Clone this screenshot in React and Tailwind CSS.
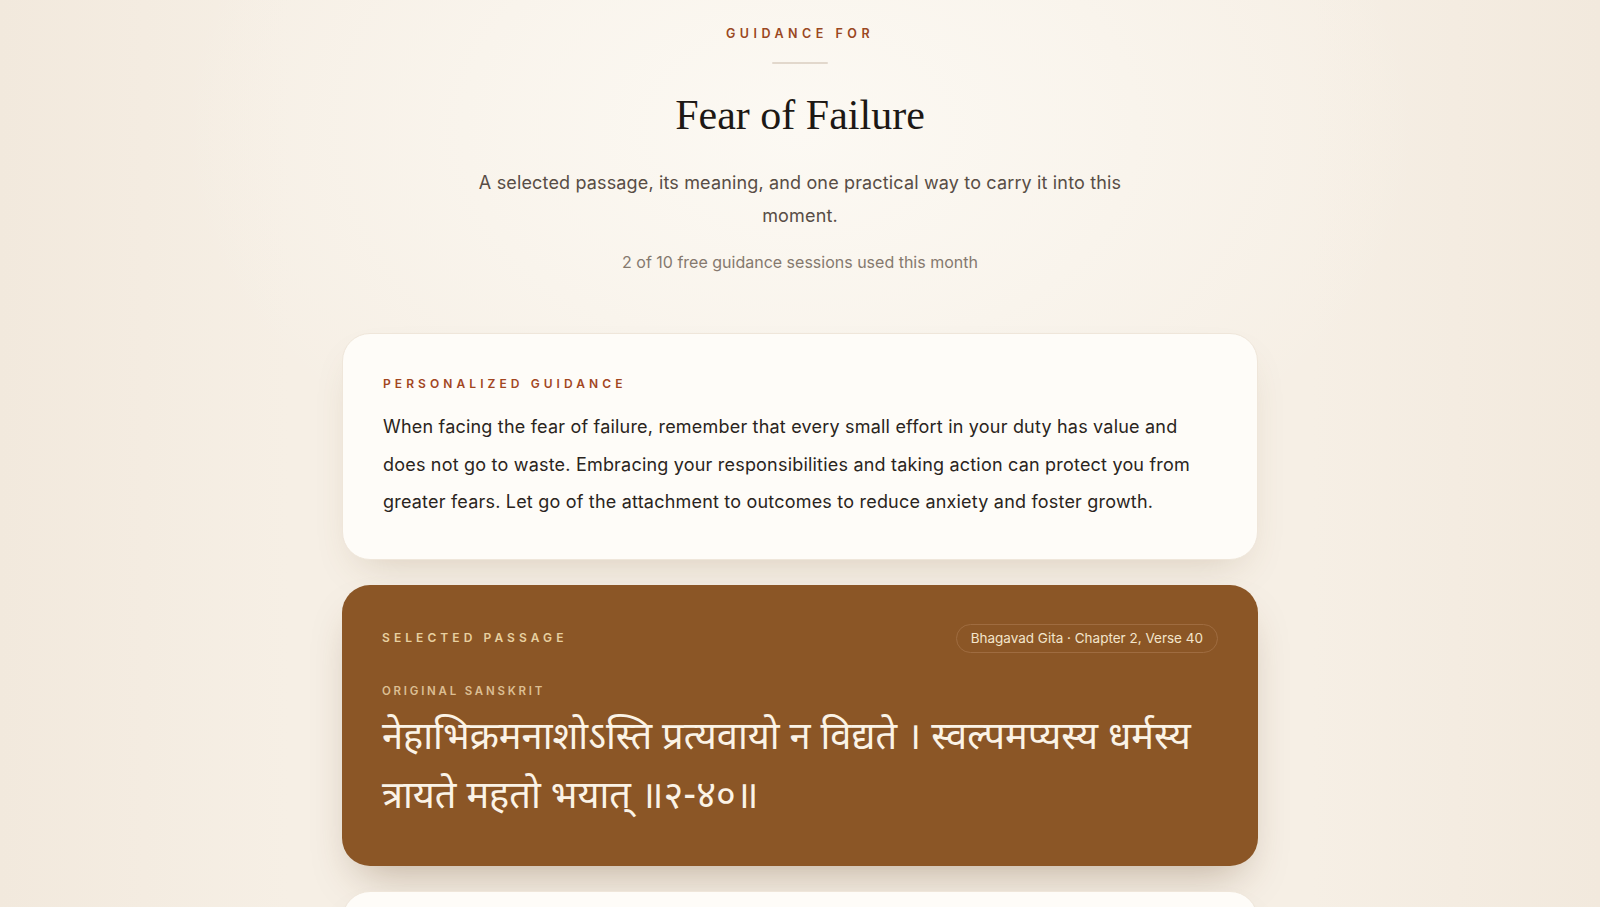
import React from 'react'

const sans = "font-['Inter','Liberation_Sans',sans-serif]"

function Label({ children, className, tracking = 'tracking-[0.34em]' }) {
  return (
    <p className={`${sans} font-semibold uppercase leading-[14px] ${tracking} ${className}`}>
      {children}
    </p>
  )
}

function PageHeader() {
  return (
    <header className="flex flex-col items-center text-center">
      <Label className="text-[12.5px] text-[#9a4822]" tracking="tracking-[0.36em]">Guidance for</Label>
      <div className="mt-[21px] h-[2px] w-[56px] rounded-full bg-[#e2d8cc]" />
      <h1 className="mt-[26px] font-['Liberation_Serif','DejaVu_Serif',serif] text-[42px] leading-[50px] text-[#1d1815]">
        Fear of Failure
      </h1>
      <p className={`${sans} mt-[26px] max-w-[670px] text-[18px] leading-[33px] tracking-[0.15px] text-[#584d45]`}>
        A selected passage, its meaning, and one practical way to carry it into this moment.
      </p>
      <p className={`${sans} mt-[19px] text-[16px] leading-[22px] text-[#85796e]`}>
        2 of 10 free guidance sessions used this month
      </p>
    </header>
  )
}

function GuidanceCard() {
  return (
    <section className="rounded-[28px] border border-[#efe6da] bg-[#fefcf8] px-10 pb-[38px] pt-[43px] shadow-[0_18px_40px_-18px_rgba(120,90,50,0.25)]">
      <Label className="text-[12px] text-[#a2461f]">Personalized guidance</Label>
      <p className={`${sans} mt-[17px] text-[18px] leading-[37.6px] tracking-[0.2px] text-[#2a2420]`}>
        When facing the fear of failure, remember that every small effort in your duty has value and does not go to
        waste. Embracing your responsibilities and taking action can protect you from greater fears. Let go of the
        attachment to outcomes to reduce anxiety and foster growth.
      </p>
    </section>
  )
}

function PassageCard() {
  return (
    <section className="rounded-[28px] bg-[#8b5626] px-10 pb-[37px] pt-[39px] shadow-[0_22px_44px_-16px_rgba(90,55,20,0.35)]">
      <div className="flex h-[29px] items-center justify-between">
        <Label className="text-[12px] font-bold text-[#e8d0a0]">Selected passage</Label>
        <span className={`${sans} flex h-[29px] items-center rounded-full border border-[#9f6c40] px-[14px] text-[13.5px] text-[#f3e5cb]`}>
          Bhagavad Gita · Chapter 2, Verse 40
        </span>
      </div>
      <Label className="mt-[31px] text-[11.5px] font-bold text-[#dcbf93]" tracking="tracking-[0.24em]">
        Original Sanskrit
      </Label>
      <p className="mt-[13px] font-['Noto_Sans_Devanagari','Noto_Serif_Devanagari','Lohit_Devanagari','Noto_Sans',sans-serif] text-[38px] leading-[59px] text-[#fbf3e6]">
        नेहाभिक्रमनाशोऽस्ति प्रत्यवायो न विद्यते । स्वल्पमप्यस्य धर्मस्य त्रायते महतो भयात् ॥२-४०॥
      </p>
    </section>
  )
}

function MeaningCard() {
  return (
    <section className="rounded-[28px] border border-[#efe6da] bg-[#fefcf8] p-10 shadow-[0_18px_40px_-18px_rgba(120,90,50,0.25)]">
      <Label className="text-[12px] text-[#a2461f]">Meaning</Label>
      <p className={`${sans} mt-[16px] text-[18px] leading-[37.6px] text-[#2a2420]`}>
        In this path no effort is ever lost, and no harm arises. Even a little of this practice protects one from great fear.
      </p>
    </section>
  )
}

export default function App() {
  return (
    <div className="min-h-screen bg-[#f3eadf] bg-[radial-gradient(ellipse_620px_420px_at_50%_130px,#fcf9f3_0%,rgba(252,249,243,0.6)_45%,rgba(243,234,223,0)_100%),linear-gradient(90deg,#f2e9dd_0%,#f6efe5_18%,#f6efe5_82%,#f2e9dd_100%)]">
      <main className="mx-auto flex max-w-[916px] flex-col pb-16 pt-[27px]">
        <PageHeader />
        <div className="mt-[60px] flex flex-col gap-[25px]">
          <GuidanceCard />
          <PassageCard />
          <MeaningCard />
        </div>
      </main>
    </div>
  )
}
